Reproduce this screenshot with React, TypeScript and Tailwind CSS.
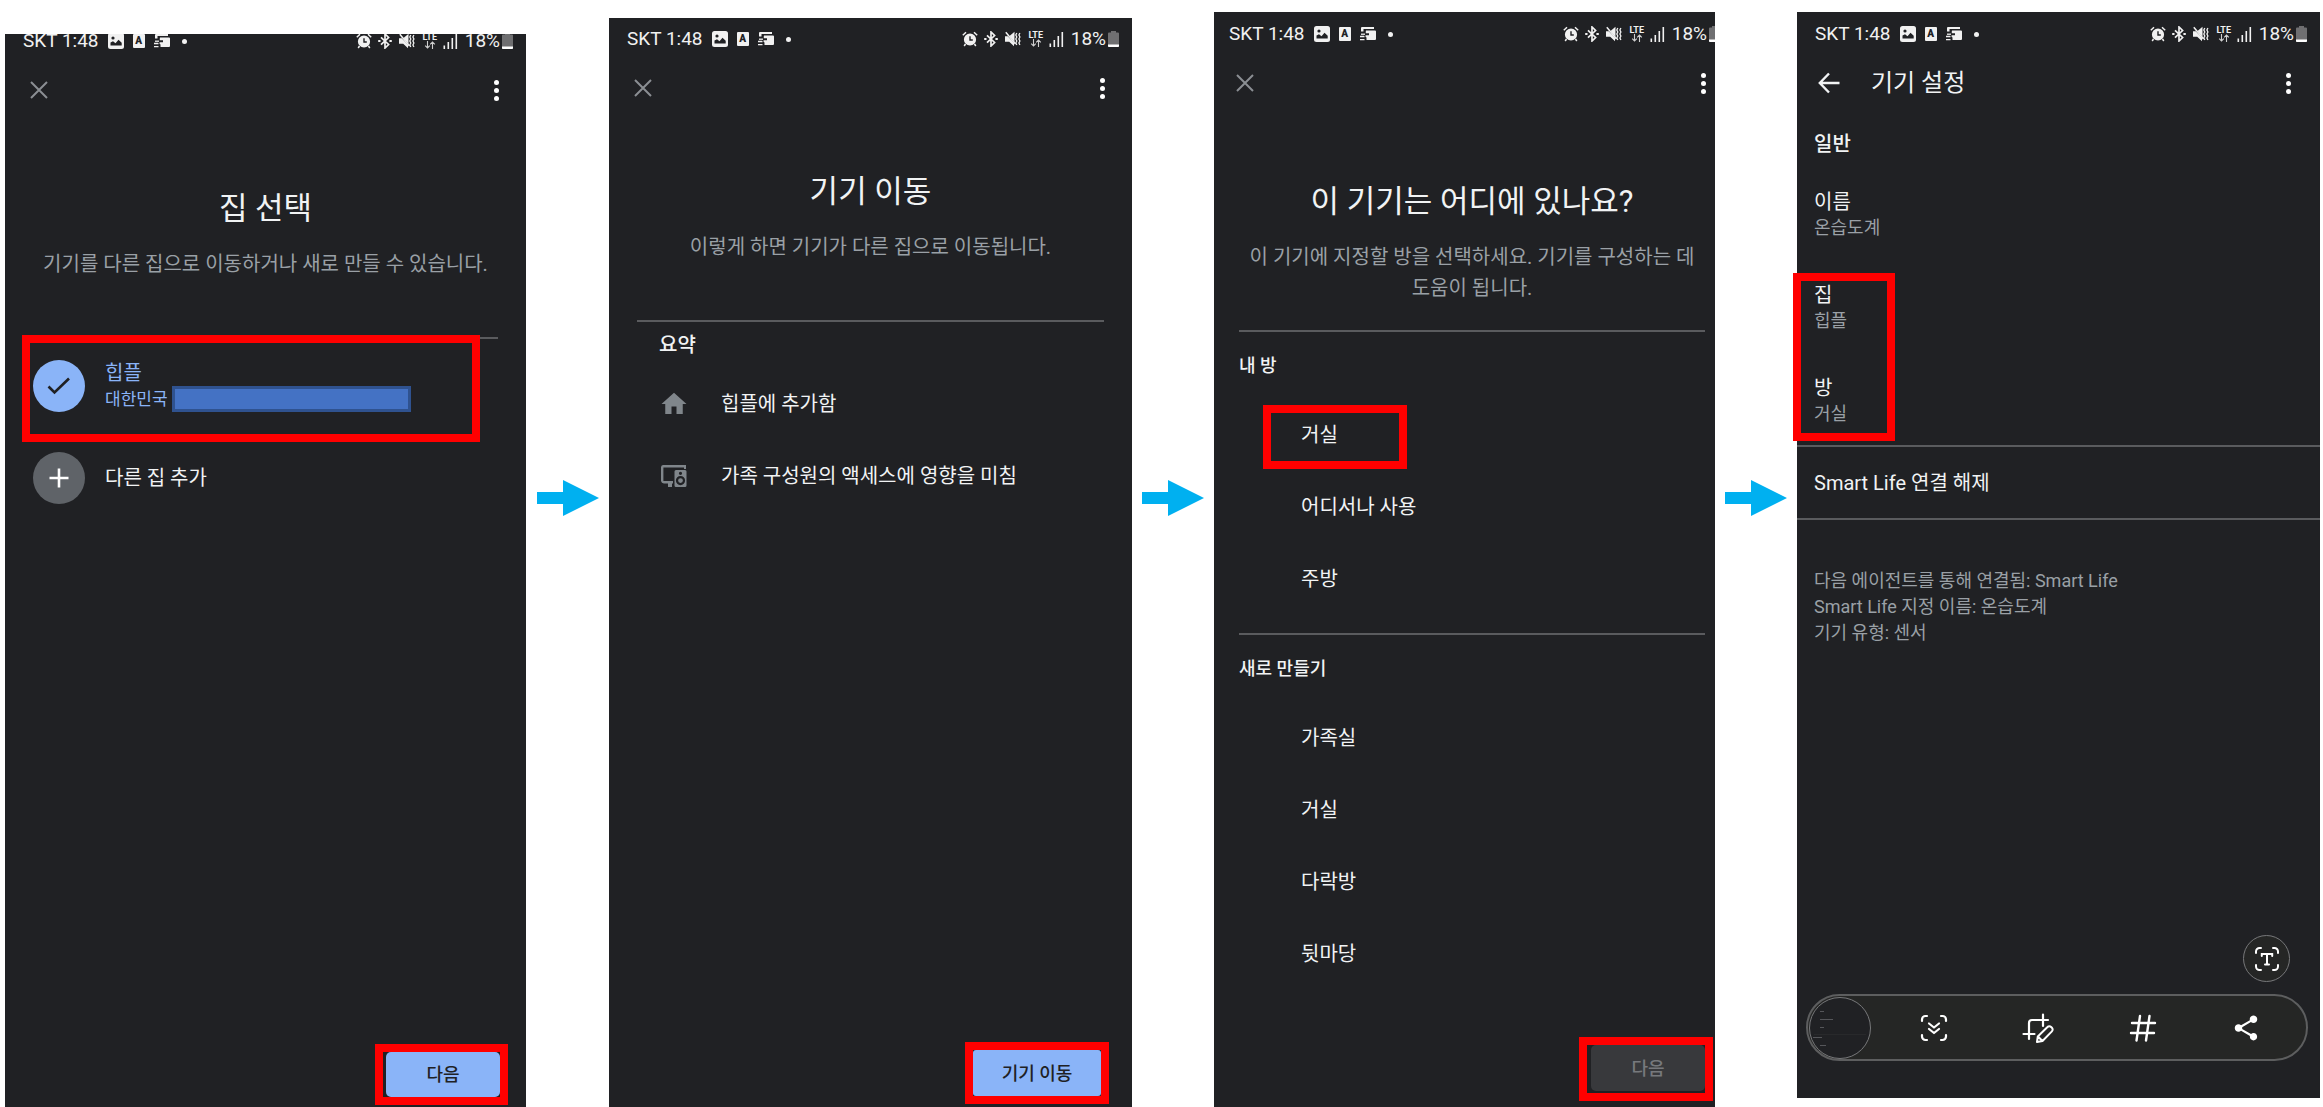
import type { ReactNode } from "react";
import clsx from "clsx";
import { MdHome, MdShare } from "react-icons/md";

const homeRooms = ["거실", "어디서나 사용", "주방"];
const newRooms = ["가족실", "거실", "다락방", "뒷마당"];

const StatusBar = () => {
  return (
    <div className="flex h-[42px] shrink-0 items-center justify-between pl-[18px] pr-[13px] text-[19px] leading-6 text-[#f1f1f1]">
      <div className="flex items-center">
        <span>SKT 1:48</span>
        <svg viewBox="0 0 16 16" className="ml-[9px] size-4">
          <rect width="16" height="16" rx="2.5" fill="#f1f1f1" />
          <circle cx="5" cy="5" r="1.6" fill="#202124" />
          <path d="M2.5 12.5V9.5l2.5-1.3 2.5 2 3-3.5 3.2 3v2.8z" fill="#202124" />
        </svg>
        <span className="ml-[9px] flex h-[14px] w-3 items-center justify-center rounded-[1px] bg-[#f1f1f1] text-[10px] leading-3 font-black text-[#202124]">
          A
        </span>
        <svg viewBox="0 0 16 14" className="ml-[9px] h-[14px] w-4">
          <path d="M2 0h12v2H3.500v2.500H1V1a1 1 0 0 1 1-1z" fill="#f1f1f1" />
          <path d="M6 3.500h9a1 1 0 0 1 1 1V12a1 1 0 0 1-1 1H6.500v-2.500L5 9z" fill="#f1f1f1" />
          <path d="M0 9.500h4.500M0 12.600h4.500" stroke="#f1f1f1" strokeWidth="1.300" />
          <path d="M3 7.200 5.500 5v1.300H9v2H5.500v1.200z" fill="#202124" />
          <path d="M1 7.200h4" stroke="#f1f1f1" strokeWidth="1.300" />
        </svg>
        <span className="ml-3 size-[5px] rounded-full bg-[#f1f1f1]" />
      </div>
      <div className="flex items-center">
        <svg viewBox="0 0 16 16" className="size-4" fill="none">
          <circle cx="8" cy="8.500" r="5.200" fill="#f1f1f1" stroke="#f1f1f1" strokeWidth="1.800" />
          <path d="M.8 4.200 4 1.200M15.200 4.200 12 1.200M3.500 13l-1.300 2M12.500 13l1.300 2" stroke="#f1f1f1" strokeWidth="1.500" />
          <path d="M8 5.300V9h2.800" stroke="#202124" strokeWidth="1.400" />
        </svg>
        <svg viewBox="0 0 14 16" className="ml-[6px] h-4 w-[14px]" fill="none" stroke="#f1f1f1" strokeWidth="1.700">
          <path d="m3 4.300 7.600 7.200L7 15V1l3.600 3.500L3 11.700" />
          <path d="M.2 8h2.300M11.400 8h2.400" strokeWidth="2" />
        </svg>
        <svg viewBox="0 0 16 16" className="ml-[7px] size-4">
          <path d="M4.500 5 9.500.8V11zM0 5.200h2.800L9 11.800v3.400L4.200 10.800H0z" fill="#f1f1f1" />
          <path d="M.8 1.200 10.500 13" stroke="#f1f1f1" strokeWidth="1.500" />
          <path d="m11.800 2-1 2 1 2-1 2 1 2-1 2 1 2M14.900 2l-1 2 1 2-1 2 1 2-1 2 1 2" fill="none" stroke="#f1f1f1" strokeWidth="1.300" />
        </svg>
        <span className="ml-[7px] flex w-4 flex-col items-center text-[9px] leading-[8px] font-bold">
          LTE
          <svg viewBox="0 0 12 8" className="h-2 w-3" fill="none" stroke="#d0d0d0" strokeWidth="1.100">
            <path d="M3.500 0v7M1.200 4.700l2.300 2.300 2.300-2.300M8.500 8V1M6.200 3.300 8.500 1l2.300 2.300" />
          </svg>
        </span>
        <svg viewBox="0 0 15 16" className="ml-[5px] h-4 w-[15px]" stroke="#f1f1f1" strokeWidth="1.600">
          <path d="M1.300 12.500V16M5.300 9v7M9.300 5v11M13.300 1v15" />
        </svg>
        <span className="ml-[7px]">18%</span>
        <svg viewBox="0 0 11 16" className="ml-[2px] h-4 w-[11px]">
          <path d="M3 0h5v1.500h2a1 1 0 0 1 1 1V16H0V2.500a1 1 0 0 1 1-1h2z" fill="#6f6f71" />
          <path d="M0 13.500h11V15a1 1 0 0 1-1 1H1a1 1 0 0 1-1-1z" fill="#fff" />
        </svg>
      </div>
    </div>
  );
};

const TopBar = ({ title }: { title?: string }) => {
  return (
    <div className={clsx("flex h-14 shrink-0 items-center justify-between", title ? "pr-[22px] pl-[18px]" : "px-5")}>
      <div className="flex items-center gap-7">
        <button aria-label={title ? "뒤로" : "닫기"} className="flex size-7 items-center justify-center">
          {title ? (
            <svg viewBox="0 0 22 22" className="size-[22px]" fill="none" stroke="#f1f3f4" strokeWidth="2.400">
              <path d="M11 1.500 1.800 11l9.200 9.500M2 11h19.500" />
            </svg>
          ) : (
            <svg viewBox="0 0 18 18" className="size-[18px]" fill="none" stroke="#8b8f93" strokeWidth="2">
              <path d="m1 1 16 16M17 1 1 17" />
            </svg>
          )}
        </button>
        {title && <h1 className="text-[24px] leading-8 text-[#f1f3f4]">{title}</h1>}
      </div>
      <button aria-label="더보기" className="flex h-7 w-5 flex-col items-center justify-center gap-[3px]">
        <span className="size-[5px] rounded-full bg-white" />
        <span className="size-[5px] rounded-full bg-white" />
        <span className="size-[5px] rounded-full bg-white" />
      </button>
    </div>
  );
};

const Intro = ({ title, text, className }: { title: string; text: string; className: string }) => {
  return (
    <div className={clsx("text-center", className)}>
      <h1 className="text-[31px] leading-10 text-[#f1f3f4]">{title}</h1>
      <p className="mt-5 mb-[26px] min-h-[62px] text-[20px] leading-[31px] break-keep text-[#9aa0a6]">{text}</p>
    </div>
  );
};

const Divider = () => <hr className="border-t-2 border-[#5a5b5e]" />;

// red frame drawn over the thing the user has to tap
const Mark = ({ className }: { className: string }) => (
  <div className={clsx("pointer-events-none absolute border-8 border-[#ff0000]", className)} />
);

const Arrow = () => (
  <div className="flex justify-center pt-[480px]">
    <svg viewBox="0 0 62 36" className="h-9 w-[62px]" fill="#00b0f0">
      <path d="M0 12h26V0l36 18-36 18V24H0z" />
    </svg>
  </div>
);

const Footer = ({ children, className }: { children: ReactNode; className: string }) => (
  <div className={clsx("mt-auto flex justify-end", className)}>
    <div className="relative">{children}</div>
  </div>
);

const Room = ({ name, marked }: { name: string; marked?: boolean }) => (
  <li className="relative">
    <button className="h-[72px] w-full pl-[62px] text-left text-[20px] leading-[30px]">{name}</button>
    {marked && <Mark className="top-[6px] left-6 h-16 w-36" />}
  </li>
);

const RoomList = ({ label, rooms, markFirst }: { label: string; rooms: string[]; markFirst?: boolean }) => (
  <section className="pt-[19px] pb-[18px]">
    <h2 className="mb-[18px] text-[18px] leading-[30px] font-medium">{label}</h2>
    <ul>
      {rooms.map((room, i) => (
        <Room key={room} name={room} marked={markFirst && i === 0} />
      ))}
    </ul>
  </section>
);

const Setting = ({ name, value }: { name: string; value: string }) => (
  <div className="leading-[26px]">
    <dt className="text-[20px]">{name}</dt>
    <dd className="text-[18px] text-[#9aa0a6]">{value}</dd>
  </div>
);

const SelectHome = () => (
  <div className="mt-[34px] flex flex-col overflow-hidden bg-[#202124]">
    <div className="-mt-[14px]">
      <StatusBar />
      <TopBar />
    </div>
    <Intro title="집 선택" text="기기를 다른 집으로 이동하거나 새로 만들 수 있습니다." className="px-5 pt-[71px]" />
    <div className="px-7">
      <Divider />
      <div className="flex flex-col gap-10 pt-5">
        <div className="relative">
          <button className="flex w-full items-center gap-5 text-left text-[#8ab4f8]">
            <span className="flex size-[52px] items-center justify-center rounded-full bg-[#8ab4f8]">
              <svg viewBox="0 0 24 18" className="h-[18px] w-6" fill="none" stroke="#202124" strokeWidth="2.600">
                <path d="m1.500 9.500 6 6L22 1.500" />
              </svg>
            </span>
            <span className="flex flex-col pt-px leading-[26px]">
              <span className="text-[20px]">힙플</span>
              <span className="flex items-center gap-1 text-[17px]">
                대한민국
                <span className="h-[26px] w-[239px] border-3 border-[#2f528f] bg-[#4472c4]" />
              </span>
            </span>
          </button>
          <Mark className="-top-6 right-[18px] -bottom-[30px] -left-[11px]" />
        </div>
        <button className="flex items-center gap-5 text-left text-[20px]">
          <span className="flex size-[52px] items-center justify-center rounded-full bg-[#5f6368]">
            <svg viewBox="0 0 20 20" className="size-5" stroke="#fff" strokeWidth="2.600">
              <path d="M10 .5v19M.5 10h19" />
            </svg>
          </span>
          다른 집 추가
        </button>
      </div>
    </div>
    <Footer className="pr-[26px] pb-[10px]">
      <button className="h-[45px] w-[114px] rounded-[5px] bg-[#8ab4f8] text-[18px] font-medium text-[#202124]">다음</button>
      <Mark className="-inset-y-2 -right-2 -left-[11px]" />
    </Footer>
  </div>
);

const MoveDevice = () => (
  <div className="mt-[18px] flex flex-col bg-[#202124]">
    <StatusBar />
    <TopBar />
    <Intro title="기기 이동" text="이렇게 하면 기기가 다른 집으로 이동됩니다." className="px-5 pt-14" />
    <div className="px-7">
      <Divider />
      <div className="px-[22px] pt-2">
        <h2 className="mb-2 text-[20px] leading-[30px] font-medium">요약</h2>
        <ul className="text-[20px] leading-[30px]">
          <li className="flex h-[72px] items-center gap-8">
            <MdHome className="size-[30px] text-[#80868b]" />
            힙플에 추가함
          </li>
          <li className="flex h-[72px] items-center gap-8">
            <svg viewBox="0 0 30 30" className="size-[30px]" fill="#80868b">
              <path d="M5 4h22v4h-2V6.400H4.400V20H14v2.400h-1V26H9v-3.600H5A3 3 0 0 1 2 20V6a2.500 2.500 0 0 1 3-2z" />
              <path
                fillRule="evenodd"
                d="M17 9h9a1.500 1.500 0 0 1 1.500 1.500v14A1.500 1.500 0 0 1 26 26h-9a1.500 1.500 0 0 1-1.500-1.500v-14A1.500 1.500 0 0 1 17 9zm4.500 1.700a1.600 1.600 0 1 0 0 3.200 1.600 1.600 0 0 0 0-3.200zm0 4.300a4.600 4.600 0 1 0 0 9.200 4.600 4.600 0 0 0 0-9.200zm0 2.200a2.400 2.400 0 1 1 0 4.800 2.400 2.400 0 0 1 0-4.800z"
              />
            </svg>
            가족 구성원의 액세스에 영향을 미침
          </li>
        </ul>
      </div>
    </div>
    <Footer className="pr-[31px] pb-[11px]">
      <button className="h-[46px] w-32 rounded-[3px] bg-[#8ab4f8] text-[18px] font-medium text-[#202124]">기기 이동</button>
      <Mark className="-inset-2" />
    </Footer>
  </div>
);

const SelectRoom = () => (
  <div className="mt-3 flex flex-col overflow-hidden bg-[#202124] pt-px">
    {/* wider than its frame, the screen is cut off at the right */}
    <div className="-mr-[18px] -ml-[3px] flex grow flex-col">
      <StatusBar />
      <TopBar />
      <Intro
        title="이 기기는 어디에 있나요?"
        text="이 기기에 지정할 방을 선택하세요. 기기를 구성하는 데 도움이 됩니다."
        className="px-[29px] pt-[71px]"
      />
      <div className="px-7">
        <Divider />
        <RoomList label="내 방" rooms={homeRooms} markFirst />
        <Divider />
        <RoomList label="새로 만들기" rooms={newRooms} />
      </div>
      <Footer className="pr-7 pb-4">
        <button disabled className="h-[46px] w-[114px] rounded-[5px] bg-[#38393c] text-[18px] font-medium text-[#77797d]">
          다음
        </button>
        <Mark className="-right-2 -top-2 -bottom-[10px] -left-3" />
      </Footer>
    </div>
  </div>
);

const DeviceSettings = () => (
  <div className="mt-3 mb-[9px] flex flex-col bg-[#202124] pt-px">
    <StatusBar />
    <TopBar title="기기 설정" />
    <section className="px-[17px] pt-[18px] pb-[18px]">
      <h2 className="mb-[30px] text-[20px] leading-[30px] font-medium">일반</h2>
      <dl className="flex flex-col gap-[41px]">
        <Setting name="이름" value="온습도계" />
        <div className="relative flex flex-col gap-[41px]">
          <Setting name="집" value="힙플" />
          <Setting name="방" value="거실" />
          <Mark className="-top-[9px] -bottom-[14px] -left-[21px] w-[102px]" />
        </div>
      </dl>
    </section>
    <Divider />
    <button className="h-[71px] px-[17px] text-left text-[20px]">Smart Life 연결 해제</button>
    <Divider />
    <div className="px-[17px] pt-12 text-[18px] leading-[26px] text-[#9aa0a6]">
      <p>다음 에이전트를 통해 연결됨: Smart Life</p>
      <p>Smart Life 지정 이름: 온습도계</p>
      <p>기기 유형: 센서</p>
    </div>
    <div className="mt-auto flex flex-col gap-3 pr-3 pb-[37px] pl-[9px]">
      <button aria-label="텍스트 추출" className="mr-[18px] flex size-[47px] items-center justify-center self-end rounded-full border border-[#77787a] bg-[#252625]">
        <svg viewBox="0 0 24 24" className="size-6" fill="none" stroke="#fff" strokeWidth="2" strokeLinecap="round">
          <path d="M1 6V4.500A3.500 3.500 0 0 1 4.500 1H6M18 1h1.500A3.500 3.500 0 0 1 23 4.500V6M23 18v1.500a3.500 3.500 0 0 1-3.500 3.500H18M6 23H4.500A3.500 3.500 0 0 1 1 19.500V18" />
          <path d="M6.800 9V7h10.400v2M12 7v10.500M10 17.500h4" />
        </svg>
      </button>
      <div className="flex h-[67px] items-center rounded-full border-2 border-[#5d5e5f] bg-[#252625] pl-px">
        <button aria-label="캡처 미리보기" className="size-[62px] shrink-0 rounded-full border border-[#77787a] bg-[#202124]">
          <svg viewBox="0 0 60 60" className="size-full" fill="#55565a">
            <path d="M10 13h4v1h-4zM10 21h13v1H10zM10 29h4v1h-4zM3 39h9v1H3zM10 47h6v1h-6z" />
            <path d="M4 36h52v.5H4z" opacity=".3" />
          </svg>
        </button>
        <div className="flex grow items-center justify-around pr-2 pl-3">
          <button aria-label="스크롤 캡처">
            <svg viewBox="0 0 28 28" className="size-7" fill="none" stroke="#fff" strokeWidth="2.200" strokeLinecap="round" strokeLinejoin="round">
              <path d="M2 7V5.500A3.500 3.500 0 0 1 5.500 2H7M21 2h1.500A3.500 3.500 0 0 1 26 5.500V7M26 21v1.500a3.500 3.500 0 0 1-3.500 3.500H21M7 26H5.500A3.500 3.500 0 0 1 2 22.500V21" />
              <path d="m9 9.500 5 4 5-4M9 15l5 4 5-4" />
            </svg>
          </button>
          <button aria-label="자르기 및 편집">
            <svg viewBox="0 0 32 30" className="h-[30px] w-8" fill="none" stroke="#fff" strokeWidth="2.200" strokeLinecap="round" strokeLinejoin="round">
              <path d="M1.500 21h11M7 26V10a3 3 0 0 1 3-3h16M21 1.500V13" />
              <path d="m15 29 .8-5.500L25.500 14a2.500 2.500 0 0 1 3.600 0l.8.800a2.500 2.500 0 0 1 0 3.600L20.500 28zM16.200 23.800l4 4" strokeWidth="2" />
            </svg>
          </button>
          <button aria-label="태그">
            <svg viewBox="0 0 28 28" className="size-7" fill="none" stroke="#fff" strokeWidth="2.400" strokeLinecap="round">
              <path d="M3 9h23M2 19h23M11 2 7.500 26.500M20.500 2 17 26.500" />
            </svg>
          </button>
          <button aria-label="공유">
            <MdShare className="size-[30px] text-white" />
          </button>
        </div>
      </div>
    </div>
  </div>
);

const App = () => {
  return (
    <main className="grid min-h-screen grid-cols-[521fr_83fr_523fr_82fr_501fr_82fr_523fr] bg-white pr-[3px] pl-[5px] font-[Roboto,'Noto_Sans_CJK_KR',sans-serif] text-[#f1f3f4]">
      <SelectHome />
      <Arrow />
      <MoveDevice />
      <Arrow />
      <SelectRoom />
      <Arrow />
      <DeviceSettings />
    </main>
  );
};

export default App;
